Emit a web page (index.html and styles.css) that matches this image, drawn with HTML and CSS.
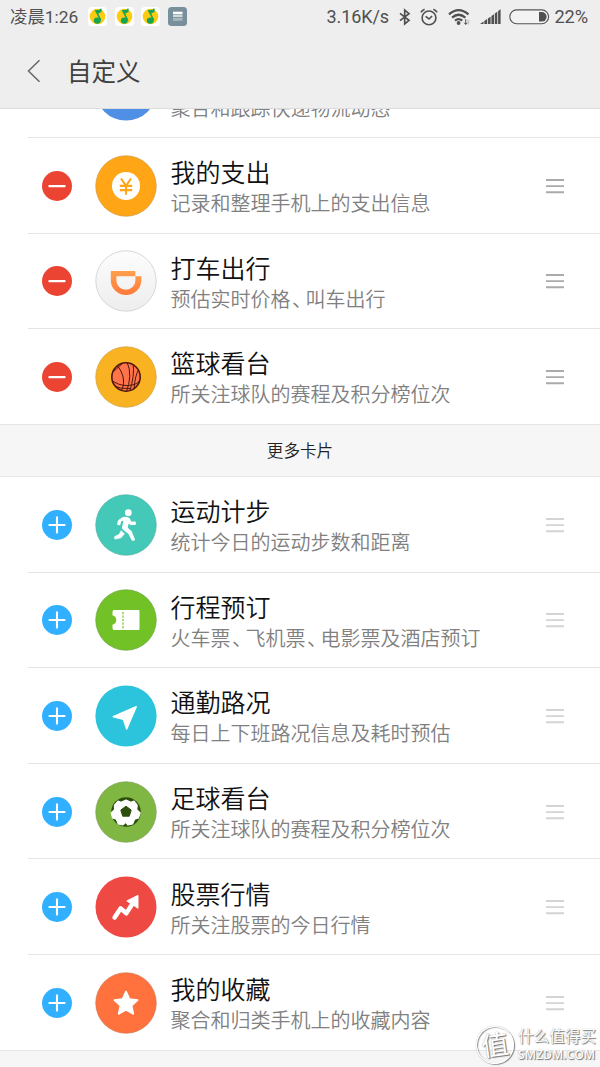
FILE: index.html
```html
<!DOCTYPE html>
<html lang="zh-CN">
<head>
<meta charset="utf-8">
<title>自定义</title>
<link rel="stylesheet" href="styles.css">
</head>
<body>
<svg class="defs" width="0" height="0">
  <defs>
    <linearGradient id="silver" x1="0" y1="0" x2="0" y2="1"><stop offset="0" stop-color="#fdfdfd"/><stop offset="1" stop-color="#ededee"/></linearGradient>
    <linearGradient id="orange" x1="0" y1="0" x2="0" y2="1"><stop offset="0" stop-color="#ffa04e"/><stop offset="1" stop-color="#ff7a3a"/></linearGradient>
    <clipPath id="ball"><circle cx="31" cy="31" r="14.2"/></clipPath>
    <symbol id="minus" viewBox="0 0 30 30"><circle cx="15" cy="15" r="15" fill="#ec4433"/><path d="M7.4 15.2h15.2" stroke="#fff" stroke-width="2.2" stroke-linecap="round"/></symbol>
    <symbol id="plus" viewBox="0 0 30 30"><circle cx="15" cy="15" r="15" fill="#31b0ff"/><path d="M7.4 15h15.2M15 7.4v15.2" stroke="#fff" stroke-width="2.1" stroke-linecap="round"/></symbol>
    <symbol id="grip" viewBox="0 0 18 16"><path d="M0 2h18M0 8.1h18M0 14.2h18" stroke="currentColor" stroke-width="1.9"/></symbol>
    <symbol id="music" viewBox="0 0 19 19"><rect width="19" height="19" rx="4" fill="#fff"/><circle cx="9.5" cy="9.5" r="7.8" fill="#fccb12"/><path d="M12.8 1.6L12.9 4.2 9.2 6.3 12.6 13.2" fill="none" stroke="#13a455" stroke-width="1.5"/><path d="M6.6 3.3l6.2-.9v1.9L8.3 6.2z" fill="#13a455"/><ellipse cx="9.3" cy="13.6" rx="3.5" ry="3.1" fill="#13a455"/></symbol>
  </defs>
</svg>

<header class="top">
  <div class="status">
    <span class="clock">凌晨1:26</span>
    <div class="notices">
      <svg width="19" height="19"><use href="#music"/></svg>
      <svg width="19" height="19"><use href="#music"/></svg>
      <svg width="19" height="19"><use href="#music"/></svg>
      <svg width="19" height="19" viewBox="0 0 19 19"><rect width="19" height="19" rx="3.5" fill="#78909c"/><path d="M5 6h9.5" stroke="#fff" stroke-width="2.6"/><path d="M5 9h9.5" stroke="#d2dade" stroke-width="2"/><path d="M5 12.3h9.5" stroke="#a9b8bf" stroke-width="3"/></svg>
    </div>
    <div class="signals">
      <span class="speed">3.16K/s</span>
      <svg class="bluetooth" width="12" height="18" viewBox="0 0 12 18" fill="none" stroke="#505050" stroke-width="1.7"><path d="M1 5.3l9 7-4.3 3.7V2L10 5.7l-9 7"/></svg>
      <svg class="alarm" width="18" height="18" viewBox="0 0 18 18" fill="none" stroke="#505050" stroke-width="1.6"><circle cx="9" cy="9.9" r="6.9"/><path d="M.9 4.4Q2 2.2 4.6 1.2M17.1 4.4Q16 2.2 13.4 1.2M5.6 8.4L9 11l3.1-3"/></svg>
      <svg class="wifi" width="22" height="18" viewBox="0 0 22 18" fill="none" stroke="#505050" stroke-width="2.2"><path d="M1 6.4Q10.5-2.2 20.5 6.4M4.1 9.6Q10.5 3.9 17.4 9.6M7 12.6Q10.6 9.6 14.3 12.6"/><circle cx="10.6" cy="15" r="1.9" fill="#505050" stroke="none"/><path d="M17.7 11.2v5M16.2 14.7l1.5 1.8 1.5-1.8" stroke-width="1"/><path d="M20.3 16.3v-4.5" stroke="#c4c4c4" stroke-width="1.7"/></svg>
      <svg class="bars" width="21" height="16" viewBox="0 0 21 16" fill="#505050"><path d="M0 15l3.5-2.4V15zM4.3 12l2.8-1.9V15H4.3zM7.9 9.6l2.7-1.8V15H7.9zM11.4 7.1L14 5.3V15h-2.6zM14.8 4.6l2.5-1.8V15h-2.5zM18.1 2l2.5-1.8V15h-2.5z"/></svg>
      <svg class="battery" width="41" height="16" viewBox="0 0 41 16"><rect x=".8" y=".9" width="38.8" height="13.8" rx="6.9" fill="#f3f3f3" stroke="#555" stroke-width="1.1"/><path d="M30 3h2.8a4.8 4.8 0 0 1 0 9.6H30z" fill="#505050"/></svg>
      <span class="percent">22%</span>
    </div>
  </div>
  <div class="titlebar">
    <svg width="14" height="24" viewBox="0 0 14 24"><path d="M12.5 1.3L1.5 12l11 10.7" fill="none" stroke="#6b6b6b" stroke-width="1.6"/></svg>
    <h1>自定义</h1>
  </div>
</header>

<main>
  <div class="scrolled">
    <div class="row">
      <svg class="toggle"><use href="#minus"/></svg>
      <svg class="icon" viewBox="0 0 62 62"><circle cx="31" cy="31" r="30.6" fill="#508fe6"/></svg>
      <div class="text"><p>聚合和跟踪快递物流动态</p></div>
      <svg class="grip"><use href="#grip"/></svg>
    </div>
  </div>
  <section class="active">
    <div class="row">
      <svg class="toggle"><use href="#minus"/></svg>
      <svg class="icon" viewBox="0 0 62 62"><circle cx="31" cy="31" r="30.3" fill="#ffa516" stroke="#c99845" stroke-width=".6"/><circle cx="31" cy="31" r="14" fill="#fff"/><path d="M26 23.5l5 7.3 5-7.3M24.8 30.9h12.4M24.8 35.1h12.4M31 30.5v9.3" fill="none" stroke="#ffa516" stroke-width="2.1"/></svg>
      <div class="text"><h2>我的支出</h2><p>记录和整理手机上的支出信息</p></div>
      <svg class="grip"><use href="#grip"/></svg>
    </div>
    <div class="row">
      <svg class="toggle"><use href="#minus"/></svg>
      <svg class="icon" viewBox="0 0 62 62"><circle cx="31" cy="31" r="30.2" fill="url(#silver)" stroke="#d2d2d2" stroke-width=".9"/><path d="M15.8 21h24.5v5.2h6v4.3a15.2 14.4 0 0 1-30.5 0zM21.4 26.2v4.3a9.5 9.2 0 0 0 19 0v-4.3z" fill="url(#orange)" fill-rule="evenodd"/></svg>
      <div class="text"><h2>打车出行</h2><p class="list"><span>预估实时价格</span><span class="comma">、</span><span>叫车出行</span></p></div>
      <svg class="grip"><use href="#grip"/></svg>
    </div>
    <div class="row">
      <svg class="toggle"><use href="#minus"/></svg>
      <svg class="icon" viewBox="0 0 62 62"><circle cx="31" cy="31" r="30.3" fill="#f9b322" stroke="#c79b42" stroke-width=".6"/><circle cx="31" cy="31" r="14.3" fill="#ff744b"/><g clip-path="url(#ball)" fill="none" stroke="#4d180b" stroke-width="1"><path d="M21 18q7 8 7.500 16T25 46M32 16q6 13-1 31M38 17q2 12-3.500 29M16 28q5-5 12-11M15 33q8 7 18 6.500T46 33M17 39q8 4.500 18 3.500M44 23q-4 6-5 20"/></g><circle cx="31" cy="31" r="14.2" fill="none" stroke="#4d180b" stroke-width="1.6"/></svg>
      <div class="text"><h2>篮球看台</h2><p>所关注球队的赛程及积分榜位次</p></div>
      <svg class="grip"><use href="#grip"/></svg>
    </div>
  </section>
  <div class="divider">更多卡片</div>
  <section class="more">
    <div class="row">
      <svg class="toggle"><use href="#plus"/></svg>
      <svg class="icon" viewBox="0 0 62 62"><circle cx="31" cy="31" r="30.3" fill="#44c8b7" stroke="#51aea1" stroke-width=".6"/><circle cx="33.3" cy="18.7" r="3.4" fill="#fff"/><path d="M26 24.2q3-2.4 7.2-.9 2.3 1 3 4.2h4.3q1 1.6 0 3.4h-4.7l-2.3-1.2-.7 4.1 3.9 3.5 3.2 8q.2 1.6-1.3 1.5l-1.8-.2-3.5-6.9-5.2-3.9q-1.5-1-1-3l1.4-6.2-2.4 1-.8 3.4q-2 .7-3.1-.5.1-4.9 3.8-6.3z" fill="#fff"/><path d="M26 36.8l3.4 2.9-3.4 4.1-5.7 1.3q-1.9-.8-.5-2.5l4.5-2.3z" fill="#fff" stroke="#fff" stroke-width=".7" stroke-linejoin="round"/></svg>
      <div class="text"><h2>运动计步</h2><p>统计今日的运动步数和距离</p></div>
      <svg class="grip"><use href="#grip"/></svg>
    </div>
    <div class="row">
      <svg class="toggle"><use href="#plus"/></svg>
      <svg class="icon" viewBox="0 0 62 62"><circle cx="31" cy="31" r="30.3" fill="#72c227" stroke="#6a9e42" stroke-width=".6"/><path d="M19 21h24.5a1 1 0 0 1 1 1v18a1 1 0 0 1-1 1H19q-1.5-.2-1.5-2v-3.200q3.800-1 3.800-4.800t-3.800-4.800V23q0-1.800 1.500-2z" fill="#fff"/><path d="M28 23v17" stroke="#72c227" stroke-width="1.2" stroke-dasharray="2.300 1.200"/></svg>
      <div class="text"><h2>行程预订</h2><p class="list"><span>火车票</span><span class="comma">、</span><span>飞机票</span><span class="comma">、</span><span>电影票及酒店预订</span></p></div>
      <svg class="grip"><use href="#grip"/></svg>
    </div>
    <div class="row">
      <svg class="toggle"><use href="#plus"/></svg>
      <svg class="icon" viewBox="0 0 62 62"><circle cx="31" cy="31" r="30.6" fill="#2bc4dc"/><path d="M41.2 21.800L31.700 44l-3.300-9.800-10.100-2.500z" fill="#fff" stroke="#fff" stroke-width="1.5" stroke-linejoin="round"/></svg>
      <div class="text"><h2>通勤路况</h2><p>每日上下班路况信息及耗时预估</p></div>
      <svg class="grip"><use href="#grip"/></svg>
    </div>
    <div class="row">
      <svg class="toggle"><use href="#plus"/></svg>
      <svg class="icon" viewBox="0 0 62 62"><circle cx="31" cy="31" r="30.3" fill="#80b742" stroke="#829960" stroke-width=".6"/><circle cx="31" cy="31" r="14.8" fill="#2d4f0b"/><path d="M23 20l3 1.2 5-2.3 5 2.3 3-1.2 3.2 4.2-.4 4.5 3.4 3.3-1.8 5.1-3.700 1.200-2.100 4.600-4.900 1.100L31 41.400l-3.300 2.600-4.600-1.100-1.800-4.600-3.700-1.200-1.400-5.100 3.300-3.300-.1-4.500z" fill="#fff" stroke="#fff" stroke-width="1.1" stroke-linejoin="round"/><path d="M31 25.200l5.200 3.800-1.900 6.200h-6.600L25.800 29z" fill="#2d4f0b" stroke="#2d4f0b" stroke-linejoin="round"/></svg>
      <div class="text"><h2>足球看台</h2><p>所关注球队的赛程及积分榜位次</p></div>
      <svg class="grip"><use href="#grip"/></svg>
    </div>
    <div class="row">
      <svg class="toggle"><use href="#plus"/></svg>
      <svg class="icon" viewBox="0 0 62 62"><circle cx="31" cy="31" r="30.5" fill="#ef4943"/><path d="M19.600 41.600l6-9.200 5.700 4.900 6-9.200" fill="none" stroke="#fff" stroke-width="4.5" stroke-linejoin="round" stroke-linecap="round"/><path d="M31.800 24.900L43 19.300v13z" fill="#fff" stroke="#fff" stroke-linejoin="round"/></svg>
      <div class="text"><h2>股票行情</h2><p>所关注股票的今日行情</p></div>
      <svg class="grip"><use href="#grip"/></svg>
    </div>
    <div class="row">
      <svg class="toggle"><use href="#plus"/></svg>
      <svg class="icon" viewBox="0 0 62 62"><circle cx="31" cy="31" r="30.3" fill="#ff723d" stroke="#c87753" stroke-width=".6"/><path d="M31 19.700l3.400 7.500 8.100.9-6 5.500 1.700 8.100-7.200-4.100-7.200 4.100 1.700-8.100-6-5.500 8.100-.9z" fill="#fff" stroke="#fff" stroke-width="1.9" stroke-linejoin="round"/></svg>
      <div class="text"><h2>我的收藏</h2><p>聚合和归类手机上的收藏内容</p></div>
      <svg class="grip"><use href="#grip"/></svg>
    </div>
  </section>
</main>
<aside class="watermark">
  <span class="seal">值</span>
  <div class="brand"><span class="name">什么值得买</span><span class="site">SMZDM.COM</span></div>
</aside>
</body>
</html>
```
FILE: styles.css
```css
* { box-sizing: border-box; }

body {
  position: relative;
  margin: 0;
  width: 600px;
  height: 1067px;
  overflow: hidden;
  background: #f6f6f6;
  font-family: "Noto Sans CJK SC", sans-serif;
}

.defs { position: absolute; }
svg { display: block; flex: none; }
h1, h2, p { margin: 0; white-space: nowrap; }

.top {
  height: 108.5px;
  background: #eee;
  border-bottom: 1px solid #dcdcdc;
}

.status {
  display: flex;
  align-items: center;
  height: 34px;
  padding: 0 9.500px 0 10px;
  color: #505050;
  font: 18px/34px Roboto, "Noto Sans CJK SC", sans-serif;
}
.clock { width: 78px; font-size: 17.4px; white-space: nowrap; }
.notices { display: flex; gap: 7.7px; padding-bottom: 1px; }
.signals { display: flex; align-items: center; margin-left: auto; }
.speed { width: 63px; letter-spacing: -.1px; }
.bluetooth { margin-left: 9px; }
.alarm { margin-left: 9px; }
.wifi { margin-left: 10px; }
.bars { margin-left: 10px; }
.battery { margin-left: 8px; }
.percent { width: 36px; margin-left: 5px; font-size: 18.3px; letter-spacing: -.2px; }

.titlebar {
  display: flex;
  align-items: center;
  gap: 26px;
  height: 73px;
  padding-left: 27px;
}
.titlebar h1 { color: #404040; font-size: 24.5px; font-weight: 400; line-height: 36px; }

main { background: #fff; }

.scrolled {
  display: flex;
  flex-direction: column;
  justify-content: flex-end;
  height: 29.500px;
  overflow: hidden;
}
.scrolled .text { padding-top: 34px; }

.row {
  display: flex;
  flex: none;
  align-items: center;
  height: 95.6px;
  margin-left: 28px;
  padding: 1px 0 0 13.5px;
  border-bottom: 1px solid #e5e5e5;
}
.toggle { width: 30px; height: 30px; }
.icon { width: 62px; height: 62px; margin-left: 23px; }
.text { flex: 1; padding: 2.5px 0 0 14px; }
.text h2 { color: #111; font-size: 25px; font-weight: 350; line-height: 31px; }
.text p { color: #808080; font-size: 20px; font-weight: 350; line-height: 31px; }
.text .list { display: flex; }
.comma { width: 15px; overflow: hidden; text-indent: 1.5px; }
.grip { width: 18px; height: 16px; margin-right: 36px; color: #aaa; }
.more .grip { color: #d4d4d4; }
.active .row:last-child, .more .row:last-child { margin-left: 0; padding-left: 41.5px; }

.divider {
  height: 52.3px;
  border-bottom: 1px solid #e8e8e8;
  background: #f6f6f6;
  color: #222;
  font-size: 16.6px;
  font-weight: 350;
  line-height: 51px;
  text-align: center;
}

.watermark {
  position: absolute;
  right: 3px;
  bottom: 3px;
  display: flex;
  align-items: center;
  gap: 4px;
  color: #fff;
  text-shadow: 1px 1px 1px #777, 0 0 1px #999;
}
.seal {
  width: 38px;
  height: 38px;
  border: 1.5px solid #fff;
  border-radius: 50%;
  box-shadow: 1px 1px 1px #888, 0 0 1px #888, inset 1px 1px 1px #999;
  font-size: 27px;
  line-height: 34px;
  text-align: center;
  transform: rotate(-8deg);
}
.brand { display: flex; flex-direction: column; width: 79px; }
.name { font-size: 15.6px; line-height: 20px; white-space: nowrap; }
.site { font: 600 12.2px/19px "Open Sans", sans-serif; white-space: nowrap; }
```
